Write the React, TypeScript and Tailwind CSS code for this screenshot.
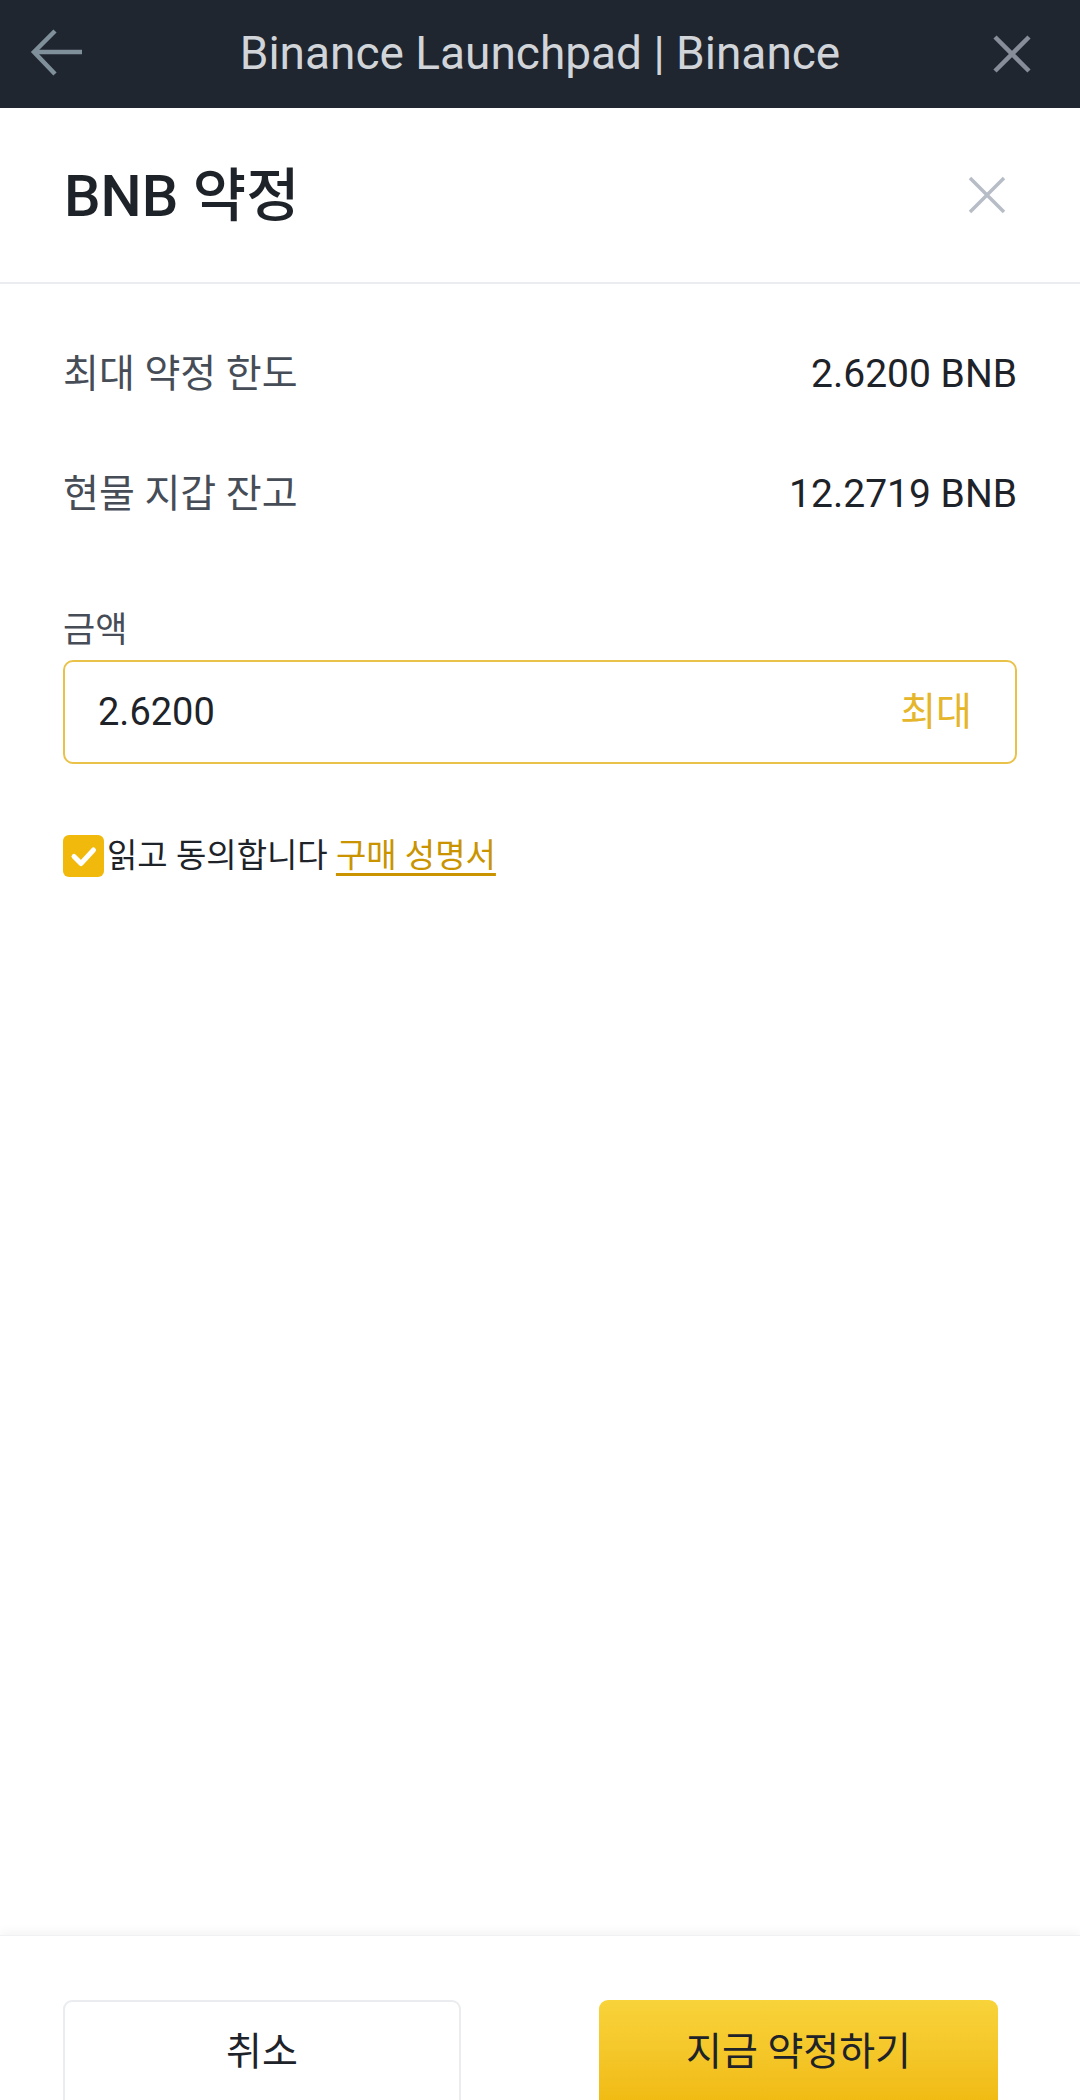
import React from "react";

export default function App() {
  return (
    <div className="w-[1080px] h-[2100px] overflow-hidden flex flex-col bg-white font-['Roboto','Noto_Sans_CJK_KR',sans-serif]">
      {/* Top app bar */}
      <div className="h-[108px] shrink-0 bg-[#1f2630] grid grid-cols-[1fr_auto_1fr] items-center">
        <div className="justify-self-start pl-[30px] flex items-center">
          <svg width="54" height="50" viewBox="0 0 54 50" fill="none">
            <path d="M4 23 H52" stroke="#80909a" strokeWidth="4.5" strokeLinecap="butt" />
            <path d="M25 2 L4 23 L25 45" stroke="#80909a" strokeWidth="4.5" strokeLinecap="butt" strokeLinejoin="miter" />
          </svg>
        </div>
        <div className="text-[46px] leading-none text-[#d1d4d9] pb-[2px]">
          Binance Launchpad | Binance
        </div>
        <div className="justify-self-end pr-[48px] flex items-center">
          <svg width="40" height="40" viewBox="0 0 40 40" fill="none">
            <path d="M3 3 L37 37 M37 3 L3 37" stroke="#878e9a" strokeWidth="4.5" />
          </svg>
        </div>
      </div>

      {/* Modal header */}
      <div className="h-[176px] shrink-0 border-b-2 border-[#eaecef] flex items-center justify-between pl-[64px] pr-[73px]">
        <div className="text-[58px] leading-none font-medium text-[#1e2329] pt-[2px]">BNB 약정</div>
        <svg width="40" height="40" viewBox="0 0 40 40" fill="none">
          <path d="M3 3 L37 37 M37 3 L3 37" stroke="#b7bdc6" strokeWidth="3.5" />
        </svg>
      </div>

      {/* Content */}
      <div className="flex-1 flex flex-col px-[63px] pt-[60px]">
        <div className="h-[60px] flex items-center justify-between">
          <span className="text-[39px] text-[#474d57]">최대 약정 한도</span>
          <span className="text-[39px] text-[#1e2329]">2.6200 BNB</span>
        </div>
        <div className="h-[60px] mt-[60px] flex items-center justify-between">
          <span className="text-[39px] text-[#474d57]">현물 지갑 잔고</span>
          <span className="text-[39px] text-[#1e2329]">12.2719 BNB</span>
        </div>

        <div className="mt-[87px] h-[40px] flex items-center text-[35px] text-[#474d57]">금액</div>

        <div className="mt-[9px] h-[104px] rounded-[10px] border-2 border-[#e9c24a] flex items-center justify-between pl-[33px] pr-[43px]">
          <span className="text-[38px] text-[#1e2329]">2.6200</span>
          <span className="text-[39px] text-[#e5b52a]">최대</span>
        </div>

        <div className="mt-[71px] h-[42px] flex items-center">
          <div className="w-[41px] h-[42px] rounded-[6px] bg-[#f0b90b] flex items-center justify-center shrink-0">
            <svg width="41" height="42" viewBox="0 0 41 42" fill="none">
              <path d="M11 21.5 L18 28.5 L30.5 15" stroke="#ffffff" strokeWidth="5" strokeLinecap="round" strokeLinejoin="round" />
            </svg>
          </div>
          <span className="ml-[3px] text-[33px] text-[#1e2329] whitespace-nowrap">
            읽고 동의합니다{" "}
            <span className="text-[#c99400] underline decoration-[3px] underline-offset-[6px]">구매 성명서</span>
          </span>
        </div>
      </div>

      {/* Bottom bar */}
      <div className="h-[165px] shrink-0 bg-white shadow-[0_-3px_10px_rgba(0,0,0,0.05)] border-t border-[#f0f1f2]">
        <div className="mt-[64px] flex pl-[63px] gap-[138px]">
          <div className="w-[398px] h-[110px] rounded-[9px] border-2 border-[#eaecef] flex items-center justify-center pb-[6px]">
            <span className="text-[39px] text-[#1e2329]">취소</span>
          </div>
          <div className="w-[399px] h-[110px] rounded-[9px] bg-gradient-to-b from-[#f8d33a] to-[#f0b90b] flex items-center justify-center pb-[6px]">
            <span className="text-[39px] text-[#1e2329]">지금 약정하기</span>
          </div>
        </div>
      </div>
    </div>
  );
}
